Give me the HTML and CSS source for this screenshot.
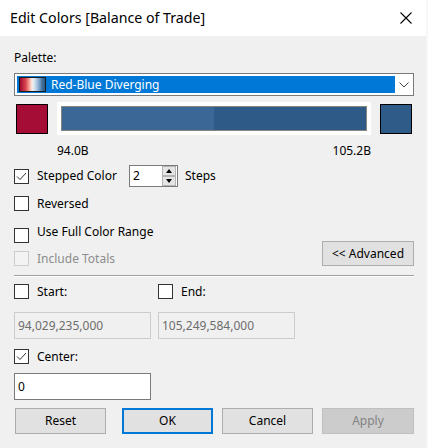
FILE: index.html
```html
<!DOCTYPE html>
<html>
<head>
<meta charset="utf-8">
<title>Edit Colors</title>
<link rel="stylesheet" href="styles.css">
</head>
<body>
<div class="dialog">
  <div class="titlebar">
    <span class="title">Edit Colors [Balance of Trade]</span>
    <svg class="close" width="12" height="12" viewBox="0 0 12 12"><path d="M0.5 0.5L11.5 11.5M11.5 0.5L0.5 11.5" stroke="#000" stroke-width="1.1" fill="none"/></svg>
  </div>
  <div class="content">
    <div class="palette-label">Palette:</div>
    <div class="select">
      <div class="select-value">
        <span class="grad-icon"></span>
        <span class="select-text">Red-Blue Diverging</span>
      </div>
      <div class="select-arrow">
        <svg width="10" height="6" viewBox="0 0 10 6"><path d="M0.5 0.5L5 5L9.5 0.5" stroke="#444" stroke-width="1" fill="none"/></svg>
      </div>
    </div>

    <div class="swatch-row">
      <div class="swatch swatch-start"></div>
      <div class="ramp">
        <div class="ramp-bar">
          <div class="step step-1"></div>
          <div class="step step-2"></div>
        </div>
      </div>
      <div class="swatch swatch-end"></div>
    </div>

    <div class="range-labels"><span>94.0B</span><span>105.2B</span></div>

    <div class="row stepped-row">
      <span class="cb"><svg width="13" height="13" viewBox="0 0 13 13"><path d="M2 6.5L5 9.5L11 3" stroke="#333" stroke-width="1" fill="none"/></svg></span>
      <span class="cb-label stepped-label">Stepped Color</span>
      <div class="spinner">
        <span class="spin-value">2</span>
        <div class="spin-btns">
          <span class="spin-btn"><span class="tri-up"></span></span>
          <span class="spin-btn"><span class="tri-down"></span></span>
        </div>
      </div>
      <span class="steps-label">Steps</span>
    </div>

    <div class="row reversed-row">
      <span class="cb"></span>
      <span class="cb-label">Reversed</span>
    </div>

    <div class="options-block">
      <div class="options-col">
        <div class="row row-top">
          <span class="cb"></span>
          <span class="cb-label lifted">Use Full Color Range</span>
        </div>
        <div class="row totals-row">
          <span class="cb cb-disabled"></span>
          <span class="cb-label label-disabled">Include Totals</span>
        </div>
      </div>
      <button class="btn btn-advanced">&lt;&lt; Advanced</button>
    </div>

    <div class="separator"></div>

    <div class="range-grid">
      <div class="row">
        <span class="cb"></span>
        <span class="cb-label">Start:</span>
      </div>
      <div class="row">
        <span class="cb"></span>
        <span class="cb-label">End:</span>
      </div>
      <div class="field field-disabled">94,029,235,000</div>
      <div class="field field-disabled">105,249,584,000</div>
    </div>

    <div class="row center-row">
      <span class="cb"><svg width="13" height="13" viewBox="0 0 13 13"><path d="M2 6.5L5 9.5L11 3" stroke="#333" stroke-width="1" fill="none"/></svg></span>
      <span class="cb-label">Center:</span>
    </div>
    <div class="field field-center">0</div>

    <div class="buttons">
      <button class="btn btn-reset">Reset</button>
      <button class="btn btn-ok">OK</button>
      <button class="btn btn-cancel">Cancel</button>
      <button class="btn btn-apply">Apply</button>
    </div>
  </div>
</div>
</body>
</html>
```
FILE: styles.css
```css
* { box-sizing: border-box; margin: 0; padding: 0; }
html { background: #f7f7f7; }
body {
  margin: 0;
  font-family: "Noto Sans", sans-serif;
  font-size: 12px;
  line-height: 16px;
  color: #000;
}
.dialog {
  width: 426px;
  height: 448px;
  background: #f0f0f0;
}
.titlebar {
  height: 36px;
  background: #fff;
  display: flex;
  align-items: center;
  justify-content: space-between;
  padding: 0 14px 0 10px;
}
.title { font-size: 14.2px; line-height: 20px; }
.close { display: block; }

.content {
  padding: 14px 12px 0 14px;
  display: flex;
  flex-direction: column;
}
.palette-label { height: 16px; }

.select {
  margin-top: 7px;
  height: 23px;
  border: 1px solid #7a7a7a;
  background: #fff;
  display: flex;
  padding: 2px 0 2px 2px;
}
.select-value {
  flex: 1;
  background: #0078d7;
  color: #fff;
  display: flex;
  align-items: center;
  padding-left: 2px;
}
.grad-icon {
  width: 27px;
  height: 15px;
  border: 1px solid #1c1c1c;
  background: linear-gradient(to right, #9e0b33 0%, #d8404b 22%, #f4a99a 38%, #fbeee9 48%, #d3e3ef 58%, #86abcf 75%, #3f6c99 90%, #2e5a87 100%);
}
.select-text { margin-left: 5px; }
.select-arrow {
  width: 18px;
  display: flex;
  align-items: center;
  justify-content: center;
}

.swatch-row {
  margin-top: 6px;
  height: 33px;
  display: flex;
}
.swatch {
  width: 32px;
  height: 30px;
  margin-top: 2px;
  border: 1px solid #000;
}
.swatch-start { margin-left: 2px; background: #a60d36; }
.swatch-end { margin-left: 9px; background: #2e5b88; }
.ramp {
  margin-left: 9px;
  width: 314px;
  height: 33px;
  background: #fff;
  padding: 4px;
}
.ramp-bar {
  height: 25px;
  border: 1px solid #86867f;
  display: flex;
}
.step { flex: 1; }
.step-1 { background: #3a6795; }
.step-2 { background: #2e5a87; }

.range-labels {
  margin-top: 8px;
  height: 16px;
  display: flex;
  justify-content: space-between;
  padding: 0 43px 0 43px;
}

.row {
  display: flex;
  align-items: center;
}
.cb {
  width: 15px;
  height: 15px;
  flex: none;
  border: 1px solid #333;
  background: #fff;
  display: flex;
  align-items: center;
  justify-content: center;
}
.cb svg { display: block; }
.cb-label { margin-left: 8px; white-space: nowrap; }
.cb-disabled { border-color: #cccccc; background: #f3f3f3; }
.label-disabled { color: #8d8d8d; }

.stepped-row { margin-top: 6px; height: 22px; }
.stepped-label { width: 92px; flex: none; }
.spinner {
  width: 49px;
  height: 22px;
  border: 1px solid #7a7a7a;
  background: #fff;
  display: flex;
  justify-content: space-between;
  padding: 0 1px 0 3px;
  align-items: center;
}
.spin-btns {
  width: 14px;
  height: 20px;
  display: flex;
  flex-direction: column;
}
.spin-btn {
  flex: 1;
  background: #e5e5e5;
  border: 1px solid #b4b4b4;
  display: flex;
  align-items: center;
  justify-content: center;
}
.tri-up {
  width: 0; height: 0;
  border-left: 3.5px solid transparent;
  border-right: 3.5px solid transparent;
  border-bottom: 4px solid #000;
}
.tri-down {
  width: 0; height: 0;
  border-left: 3.5px solid transparent;
  border-right: 3.5px solid transparent;
  border-top: 4px solid #000;
}
.steps-label { margin-left: 7px; }

.reversed-row { margin-top: 9px; height: 15px; }

.options-block {
  margin-top: 17px;
  display: flex;
  justify-content: space-between;
}
.options-col { display: flex; flex-direction: column; }
.row-top { align-items: flex-start; height: 15px; }
.lifted { margin-top: -4px; }
.totals-row { margin-top: 8px; height: 15px; }

.btn {
  font-family: "Noto Sans", sans-serif;
  font-size: 12px;
  line-height: 16px;
  color: #000;
  background: #e1e1e1;
  border: 1px solid #adadad;
  height: 26px;
  width: 91px;
  flex: none;
}
.btn-advanced { align-self: flex-end; width: 92px; height: 25px; }

.separator {
  margin-top: 9px;
  height: 2px;
  border-top: 1px solid #a0a0a0;
  border-bottom: 1px solid #ffffff;
}

.range-grid {
  margin-top: 7px;
  display: grid;
  grid-template-columns: 137px 137px;
  column-gap: 7px;
  row-gap: 13px;
}
.range-grid .row { height: 15px; }
.field {
  height: 27px;
  width: 137px;
  display: flex;
  align-items: center;
  padding-left: 3px;
}
.field-disabled {
  border: 1px solid #cccccc;
  background: #f0f0f0;
  color: #6d6d6d;
}
.center-row { margin-top: 10px; height: 15px; }
.field-center {
  margin-top: 9px;
  border: 1px solid #7a7a7a;
  background: #fff;
}

.buttons {
  margin-top: 8px;
  display: flex;
}
.btn-reset { margin-left: 1px; }
.btn-ok { margin-left: 16px; border: 2px solid #0078d7; }
.btn-cancel { margin-left: 9px; }
.btn-apply {
  margin-left: 9px;
  width: 92px;
  background: #cccccc;
  border-color: #bfbfbf;
  color: #838383;
}
```
